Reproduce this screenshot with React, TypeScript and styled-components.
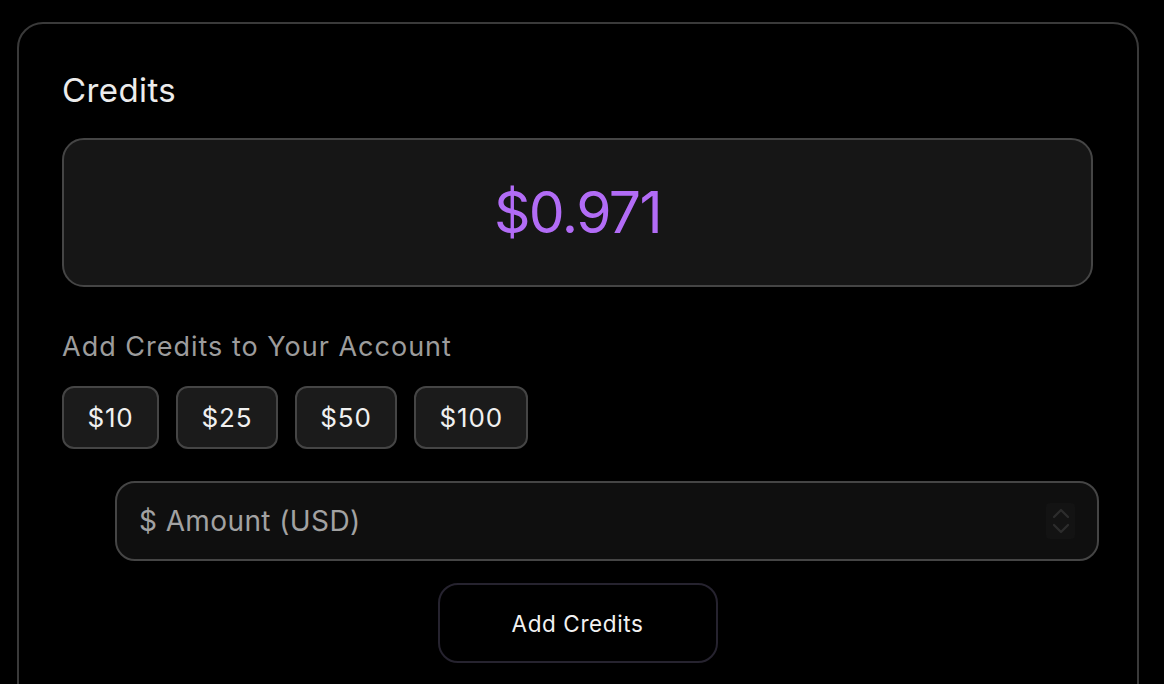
import React from "react";
import styled, { createGlobalStyle } from "styled-components";

const Global = createGlobalStyle`
  html, body { margin: 0; padding: 0; background: #000; }
  body { font-family: Inter, "Noto Sans", "Liberation Sans", sans-serif; -webkit-font-smoothing: antialiased; }
  * { box-sizing: border-box; }
`;

const Page = styled.div`
  padding: 22px 25px 0 17px;
  height: 684px;
  overflow: hidden;
`;

const Card = styled.section`
  border: 2px solid #3a3a3a;
  border-radius: 26px;
  padding: 45px 44px 60px 43px;
  min-height: 720px;
  display: flex;
  flex-direction: column;
`;

const Title = styled.h2`
  margin: 0;
  font-size: 33px;
  line-height: 42px;
  font-weight: 400;
  color: #ececec;
  letter-spacing: 0.4px;
`;

const Balance = styled.div`
  margin-top: 27px;
  height: 149px;
  border: 2px solid #454545;
  border-radius: 22px;
  background: #161616;
  display: flex;
  align-items: center;
  justify-content: center;
`;

const Amount = styled.span`
  font-size: 57px;
  line-height: 1;
  color: #b26cf6;
  letter-spacing: -1.6px;
`;

const Label = styled.div`
  margin-top: 43px;
  font-size: 27px;
  line-height: 34px;
  color: #9c9c9c;
  letter-spacing: 1px;
`;

const Presets = styled.div`
  margin-top: 22px;
  display: flex;
  gap: 17px;
`;

const Preset = styled.button`
  height: 63px;
  padding: 0 23.5px;
  border: 2px solid #454545;
  border-radius: 12px;
  background: #1b1b1b;
  color: #f0f0f0;
  font-family: inherit;
  font-size: 26px;
  letter-spacing: 0.8px;
  cursor: pointer;
`;

const InputBox = styled.div`
  margin: 32px -6px 0 53px;
  height: 80px;
  border: 2px solid #454545;
  border-radius: 20px;
  background: #0f0f0f;
  display: flex;
  align-items: center;
  padding: 0 22px 0 20px;
`;

const Input = styled.input`
  flex: 1;
  border: none;
  outline: none;
  background: transparent;
  color: #eee;
  font-family: inherit;
  font-size: 28px;
  letter-spacing: 0.4px;
  &::placeholder { color: #a2a2a2; }
`;

const Spinner = styled.div`
  width: 29px;
  height: 36px;
  border-radius: 4px;
  background: #131313;
  display: flex;
  align-items: center;
  justify-content: center;
`;

const SubmitRow = styled.div`
  margin-top: 22px;
  display: flex;
  justify-content: center;
`;

const Submit = styled.button`
  width: 280px;
  height: 80px;
  border: 2px solid #26232f;
  border-radius: 20px;
  background: #000;
  color: #f2f2f2;
  font-family: inherit;
  font-size: 22.5px;
  letter-spacing: 0.6px;
  cursor: pointer;
`;

export default function App() {
  return (
    <>
      <Global />
      <Page>
        <Card>
          <Title>Credits</Title>
          <Balance>
            <Amount>$0.971</Amount>
          </Balance>
          <Label>Add Credits to Your Account</Label>
          <Presets>
            {["$10", "$25", "$50", "$100"].map((p) => (
              <Preset key={p}>{p}</Preset>
            ))}
          </Presets>
          <InputBox>
            <Input type="text" placeholder="$ Amount (USD)" />
            <Spinner>
              <svg width="22" height="30" viewBox="0 0 22 30" fill="none" stroke="#2c2c2c" strokeWidth="2.4" strokeLinecap="round" strokeLinejoin="round">
                <path d="M4 11 L11 4 L18 11" />
                <path d="M4 19 L11 26 L18 19" />
              </svg>
            </Spinner>
          </InputBox>
          <SubmitRow>
            <Submit>Add Credits</Submit>
          </SubmitRow>
        </Card>
      </Page>
    </>
  );
}
